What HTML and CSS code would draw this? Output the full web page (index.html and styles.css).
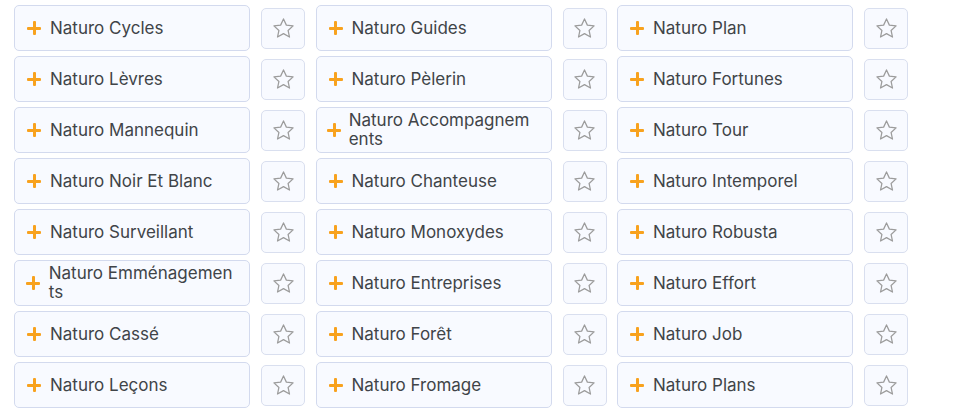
FILE: index.html
```html
<!DOCTYPE html>
<html lang="fr">
<head>
<meta charset="utf-8">
<title>Naturo</title>
<link rel="stylesheet" href="styles.css">
</head>
<body>
<div class="grid">
  <div class="cell"><button class="item"><span class="plus"></span><span class="label">Naturo Cycles</span></button><button class="fav"><svg viewBox="0 0 24 24"><path d="M12 2.8l2.75 5.95 6.45.7-4.8 4.4 1.35 6.35L12 16.95 6.25 20.2 7.6 13.85 2.8 9.45l6.45-.7z"/></svg></button></div>
  <div class="cell"><button class="item"><span class="plus"></span><span class="label">Naturo Guides</span></button><button class="fav"><svg viewBox="0 0 24 24"><path d="M12 2.8l2.75 5.95 6.45.7-4.8 4.4 1.35 6.35L12 16.95 6.25 20.2 7.6 13.85 2.8 9.45l6.45-.7z"/></svg></button></div>
  <div class="cell"><button class="item"><span class="plus"></span><span class="label">Naturo Plan</span></button><button class="fav"><svg viewBox="0 0 24 24"><path d="M12 2.8l2.75 5.95 6.45.7-4.8 4.4 1.35 6.35L12 16.95 6.25 20.2 7.6 13.85 2.8 9.45l6.45-.7z"/></svg></button></div>

  <div class="cell"><button class="item"><span class="plus"></span><span class="label">Naturo Lèvres</span></button><button class="fav"><svg viewBox="0 0 24 24"><path d="M12 2.8l2.75 5.95 6.45.7-4.8 4.4 1.35 6.35L12 16.95 6.25 20.2 7.6 13.85 2.8 9.45l6.45-.7z"/></svg></button></div>
  <div class="cell"><button class="item"><span class="plus"></span><span class="label">Naturo Pèlerin</span></button><button class="fav"><svg viewBox="0 0 24 24"><path d="M12 2.8l2.75 5.95 6.45.7-4.8 4.4 1.35 6.35L12 16.95 6.25 20.2 7.6 13.85 2.8 9.45l6.45-.7z"/></svg></button></div>
  <div class="cell"><button class="item"><span class="plus"></span><span class="label">Naturo Fortunes</span></button><button class="fav"><svg viewBox="0 0 24 24"><path d="M12 2.8l2.75 5.95 6.45.7-4.8 4.4 1.35 6.35L12 16.95 6.25 20.2 7.6 13.85 2.8 9.45l6.45-.7z"/></svg></button></div>

  <div class="cell"><button class="item"><span class="plus"></span><span class="label">Naturo Mannequin</span></button><button class="fav"><svg viewBox="0 0 24 24"><path d="M12 2.8l2.75 5.95 6.45.7-4.8 4.4 1.35 6.35L12 16.95 6.25 20.2 7.6 13.85 2.8 9.45l6.45-.7z"/></svg></button></div>
  <div class="cell"><button class="item"><span class="plus"></span><span class="label">Naturo Accompagnements</span></button><button class="fav"><svg viewBox="0 0 24 24"><path d="M12 2.8l2.75 5.95 6.45.7-4.8 4.4 1.35 6.35L12 16.95 6.25 20.2 7.6 13.85 2.8 9.45l6.45-.7z"/></svg></button></div>
  <div class="cell"><button class="item"><span class="plus"></span><span class="label">Naturo Tour</span></button><button class="fav"><svg viewBox="0 0 24 24"><path d="M12 2.8l2.75 5.95 6.45.7-4.8 4.4 1.35 6.35L12 16.95 6.25 20.2 7.6 13.85 2.8 9.45l6.45-.7z"/></svg></button></div>

  <div class="cell"><button class="item"><span class="plus"></span><span class="label">Naturo Noir Et Blanc</span></button><button class="fav"><svg viewBox="0 0 24 24"><path d="M12 2.8l2.75 5.95 6.45.7-4.8 4.4 1.35 6.35L12 16.95 6.25 20.2 7.6 13.85 2.8 9.45l6.45-.7z"/></svg></button></div>
  <div class="cell"><button class="item"><span class="plus"></span><span class="label">Naturo Chanteuse</span></button><button class="fav"><svg viewBox="0 0 24 24"><path d="M12 2.8l2.75 5.95 6.45.7-4.8 4.4 1.35 6.35L12 16.95 6.25 20.2 7.6 13.85 2.8 9.45l6.45-.7z"/></svg></button></div>
  <div class="cell"><button class="item"><span class="plus"></span><span class="label">Naturo Intemporel</span></button><button class="fav"><svg viewBox="0 0 24 24"><path d="M12 2.8l2.75 5.95 6.45.7-4.8 4.4 1.35 6.35L12 16.95 6.25 20.2 7.6 13.85 2.8 9.45l6.45-.7z"/></svg></button></div>

  <div class="cell"><button class="item"><span class="plus"></span><span class="label">Naturo Surveillant</span></button><button class="fav"><svg viewBox="0 0 24 24"><path d="M12 2.8l2.75 5.95 6.45.7-4.8 4.4 1.35 6.35L12 16.95 6.25 20.2 7.6 13.85 2.8 9.45l6.45-.7z"/></svg></button></div>
  <div class="cell"><button class="item"><span class="plus"></span><span class="label">Naturo Monoxydes</span></button><button class="fav"><svg viewBox="0 0 24 24"><path d="M12 2.8l2.75 5.95 6.45.7-4.8 4.4 1.35 6.35L12 16.95 6.25 20.2 7.6 13.85 2.8 9.45l6.45-.7z"/></svg></button></div>
  <div class="cell"><button class="item"><span class="plus"></span><span class="label">Naturo Robusta</span></button><button class="fav"><svg viewBox="0 0 24 24"><path d="M12 2.8l2.75 5.95 6.45.7-4.8 4.4 1.35 6.35L12 16.95 6.25 20.2 7.6 13.85 2.8 9.45l6.45-.7z"/></svg></button></div>

  <div class="cell"><button class="item"><span class="plus"></span><span class="label">Naturo Emménagements</span></button><button class="fav"><svg viewBox="0 0 24 24"><path d="M12 2.8l2.75 5.95 6.45.7-4.8 4.4 1.35 6.35L12 16.95 6.25 20.2 7.6 13.85 2.8 9.45l6.45-.7z"/></svg></button></div>
  <div class="cell"><button class="item"><span class="plus"></span><span class="label">Naturo Entreprises</span></button><button class="fav"><svg viewBox="0 0 24 24"><path d="M12 2.8l2.75 5.95 6.45.7-4.8 4.4 1.35 6.35L12 16.95 6.25 20.2 7.6 13.85 2.8 9.45l6.45-.7z"/></svg></button></div>
  <div class="cell"><button class="item"><span class="plus"></span><span class="label">Naturo Effort</span></button><button class="fav"><svg viewBox="0 0 24 24"><path d="M12 2.8l2.75 5.95 6.45.7-4.8 4.4 1.35 6.35L12 16.95 6.25 20.2 7.6 13.85 2.8 9.45l6.45-.7z"/></svg></button></div>

  <div class="cell"><button class="item"><span class="plus"></span><span class="label">Naturo Cassé</span></button><button class="fav"><svg viewBox="0 0 24 24"><path d="M12 2.8l2.75 5.95 6.45.7-4.8 4.4 1.35 6.35L12 16.95 6.25 20.2 7.6 13.85 2.8 9.45l6.45-.7z"/></svg></button></div>
  <div class="cell"><button class="item"><span class="plus"></span><span class="label">Naturo Forêt</span></button><button class="fav"><svg viewBox="0 0 24 24"><path d="M12 2.8l2.75 5.95 6.45.7-4.8 4.4 1.35 6.35L12 16.95 6.25 20.2 7.6 13.85 2.8 9.45l6.45-.7z"/></svg></button></div>
  <div class="cell"><button class="item"><span class="plus"></span><span class="label">Naturo Job</span></button><button class="fav"><svg viewBox="0 0 24 24"><path d="M12 2.8l2.75 5.95 6.45.7-4.8 4.4 1.35 6.35L12 16.95 6.25 20.2 7.6 13.85 2.8 9.45l6.45-.7z"/></svg></button></div>

  <div class="cell"><button class="item"><span class="plus"></span><span class="label">Naturo Leçons</span></button><button class="fav"><svg viewBox="0 0 24 24"><path d="M12 2.8l2.75 5.95 6.45.7-4.8 4.4 1.35 6.35L12 16.95 6.25 20.2 7.6 13.85 2.8 9.45l6.45-.7z"/></svg></button></div>
  <div class="cell"><button class="item"><span class="plus"></span><span class="label">Naturo Fromage</span></button><button class="fav"><svg viewBox="0 0 24 24"><path d="M12 2.8l2.75 5.95 6.45.7-4.8 4.4 1.35 6.35L12 16.95 6.25 20.2 7.6 13.85 2.8 9.45l6.45-.7z"/></svg></button></div>
  <div class="cell"><button class="item"><span class="plus"></span><span class="label">Naturo Plans</span></button><button class="fav"><svg viewBox="0 0 24 24"><path d="M12 2.8l2.75 5.95 6.45.7-4.8 4.4 1.35 6.35L12 16.95 6.25 20.2 7.6 13.85 2.8 9.45l6.45-.7z"/></svg></button></div>
</div>
</body>
</html>
```
FILE: styles.css
```css
* { box-sizing: border-box; }
html, body { margin: 0; padding: 0; background: #ffffff; }
body { font-family: "Inter", "Open Sans", sans-serif; color: #404448; }

.grid {
  display: grid;
  grid-template-columns: repeat(3, 291px);
  column-gap: 10.5px;
  row-gap: 5px;
  padding: 5px 0 0 14px;
}

.cell {
  display: flex;
  align-items: center;
  gap: 11px;
}

.item {
  width: 236px;
  height: 46px;
  display: flex;
  align-items: center;
  padding: 0 13px 0 12px;
  background: #f8faff;
  border: 1px solid #d3daee;
  border-radius: 5px;
  font-family: inherit;
  font-size: 17px;
  font-weight: 400;
  line-height: 19px;
  color: #404448;
  text-align: left;
  cursor: pointer;
}

.plus {
  position: relative;
  flex: 0 1 23px;
  min-width: 0;
  height: 14px;
}
.plus::before, .plus::after {
  content: "";
  position: absolute;
  background: #f8a21e;
  border-radius: 1px;
}
.plus::before { left: calc(50% - 11.5px); width: 14px; top: 5.5px; height: 3px; }
.plus::after { top: 0; bottom: 0; left: calc(50% - 6px); width: 3px; }

.label {
  flex: 0 1 auto;
  word-break: break-all;
}

.fav {
  width: 44px;
  height: 41px;
  display: flex;
  align-items: center;
  justify-content: center;
  padding: 0;
  background: #f8faff;
  border: 1px solid #d9dfef;
  border-radius: 5px;
  cursor: pointer;
}
.fav svg {
  width: 25px;
  height: 25px;
  fill: none;
  stroke: #9c9c9c;
  stroke-width: 1.2;
  stroke-linejoin: round;
}
```
